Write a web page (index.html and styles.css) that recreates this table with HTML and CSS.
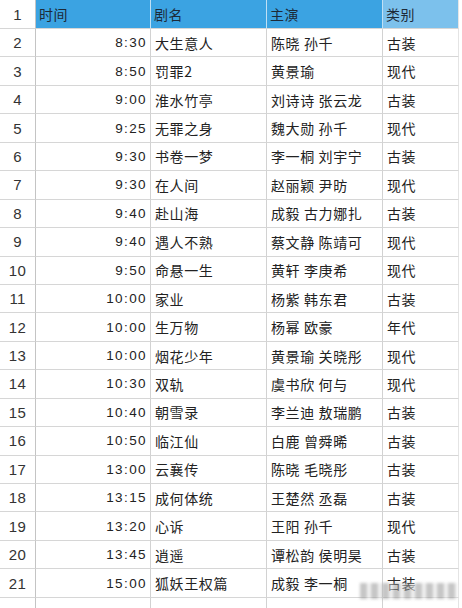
FILE: index.html
```html
<!DOCTYPE html>
<html lang="zh">
<head>
<meta charset="utf-8">
<title>排期表</title>
<link rel="stylesheet" href="styles.css">
</head>
<body>
<div class="sheet">
  <div class="grid">
    <div class="c num hdr-num">1</div>
    <div class="c head">时间</div>
    <div class="c head">剧名</div>
    <div class="c head">主演</div>
    <div class="c head head-last">类别</div>

    <div class="c num">2</div><div class="c time">8:30</div><div class="c txt">大生意人</div><div class="c txt">陈晓 孙千</div><div class="c txt last">古装</div>
    <div class="c num">3</div><div class="c time">8:50</div><div class="c txt">罚罪2</div><div class="c txt">黄景瑜</div><div class="c txt last">现代</div>
    <div class="c num">4</div><div class="c time">9:00</div><div class="c txt">淮水竹亭</div><div class="c txt">刘诗诗 张云龙</div><div class="c txt last">古装</div>
    <div class="c num">5</div><div class="c time">9:25</div><div class="c txt">无罪之身</div><div class="c txt">魏大勋 孙千</div><div class="c txt last">现代</div>
    <div class="c num">6</div><div class="c time">9:30</div><div class="c txt">书卷一梦</div><div class="c txt">李一桐 刘宇宁</div><div class="c txt last">古装</div>
    <div class="c num">7</div><div class="c time">9:30</div><div class="c txt">在人间</div><div class="c txt">赵丽颖 尹昉</div><div class="c txt last">现代</div>
    <div class="c num">8</div><div class="c time">9:40</div><div class="c txt">赴山海</div><div class="c txt">成毅 古力娜扎</div><div class="c txt last">古装</div>
    <div class="c num">9</div><div class="c time">9:40</div><div class="c txt">遇人不熟</div><div class="c txt">蔡文静 陈靖可</div><div class="c txt last">现代</div>
    <div class="c num">10</div><div class="c time">9:50</div><div class="c txt">命悬一生</div><div class="c txt">黄轩 李庚希</div><div class="c txt last">现代</div>
    <div class="c num">11</div><div class="c time">10:00</div><div class="c txt">家业</div><div class="c txt">杨紫 韩东君</div><div class="c txt last">古装</div>
    <div class="c num">12</div><div class="c time">10:00</div><div class="c txt">生万物</div><div class="c txt">杨幂 欧豪</div><div class="c txt last">年代</div>
    <div class="c num">13</div><div class="c time">10:00</div><div class="c txt">烟花少年</div><div class="c txt">黄景瑜 关晓彤</div><div class="c txt last">现代</div>
    <div class="c num">14</div><div class="c time">10:30</div><div class="c txt">双轨</div><div class="c txt">虞书欣 何与</div><div class="c txt last">现代</div>
    <div class="c num">15</div><div class="c time">10:40</div><div class="c txt">朝雪录</div><div class="c txt">李兰迪 敖瑞鹏</div><div class="c txt last">古装</div>
    <div class="c num">16</div><div class="c time">10:50</div><div class="c txt">临江仙</div><div class="c txt">白鹿 曾舜晞</div><div class="c txt last">古装</div>
    <div class="c num">17</div><div class="c time">13:00</div><div class="c txt">云襄传</div><div class="c txt">陈晓 毛晓彤</div><div class="c txt last">古装</div>
    <div class="c num">18</div><div class="c time">13:15</div><div class="c txt">成何体统</div><div class="c txt">王楚然 丞磊</div><div class="c txt last">古装</div>
    <div class="c num">19</div><div class="c time">13:20</div><div class="c txt">心诉</div><div class="c txt">王阳 孙千</div><div class="c txt last">现代</div>
    <div class="c num">20</div><div class="c time">13:45</div><div class="c txt">逍遥</div><div class="c txt">谭松韵 侯明昊</div><div class="c txt last">古装</div>
    <div class="c num">21</div><div class="c time">15:00</div><div class="c txt">狐妖王权篇</div><div class="c txt">成毅 李一桐</div><div class="c txt last">古装</div>

    <div class="c num"></div><div class="c"></div><div class="c"></div><div class="c"></div><div class="c last"></div>
  </div>
  <div class="watermark" aria-hidden="true"></div>
</div>
</body>
</html>
```

FILE: styles.css
```css
html, body {
  margin: 0;
  padding: 0;
  background: #ffffff;
}

.sheet {
  position: relative;
  width: 462px;
  height: 608px;
  overflow: hidden;
  background: #ffffff;
}

.grid {
  display: grid;
  grid-template-columns: 36px 115px 116px 116px 76px;
  grid-template-rows: 29px repeat(20, 28.45px) 30px;
}

.c {
  box-sizing: border-box;
  border-right: 1px solid #d2d2d2;
  border-bottom: 1px solid #d6d6d6;
  display: flex;
  align-items: center;
  color: #222222;
  font-family: "Liberation Sans", "Noto Sans CJK SC", sans-serif;
  white-space: nowrap;
  overflow: hidden;
}

.num {
  justify-content: center;
  font-size: 15px;
  letter-spacing: 0.3px;
  color: #333333;
  border-right-color: #c4c4c4;
}

.head {
  background: #3ba3e2;
  border-right: 1px solid #bfe0f5;
  padding-left: 3px;
  font-family: "Noto Sans CJK SC", sans-serif;
  font-size: 14px;
  letter-spacing: 0.6px;
  color: #1d2a38;
}

.head-last {
  background: #7cc1ec;
  border-right-color: #e6e6e6;
}

.time {
  justify-content: flex-end;
  padding-right: 3px;
  font-size: 13.5px;
  letter-spacing: 1.4px;
}

.txt {
  padding-left: 4px;
  font-family: "Noto Sans CJK SC", sans-serif;
  font-size: 14px;
  letter-spacing: 0.6px;
}

.last {
  border-right-color: #e4e4e4;
}

.watermark {
  position: absolute;
  left: 360px;
  top: 583px;
  width: 98px;
  height: 16px;
  background:
    repeating-linear-gradient(90deg,
      rgba(150, 150, 150, 0.55) 0 7px,
      rgba(235, 235, 235, 0.6) 7px 11px);
  filter: blur(1.6px);
}
```
